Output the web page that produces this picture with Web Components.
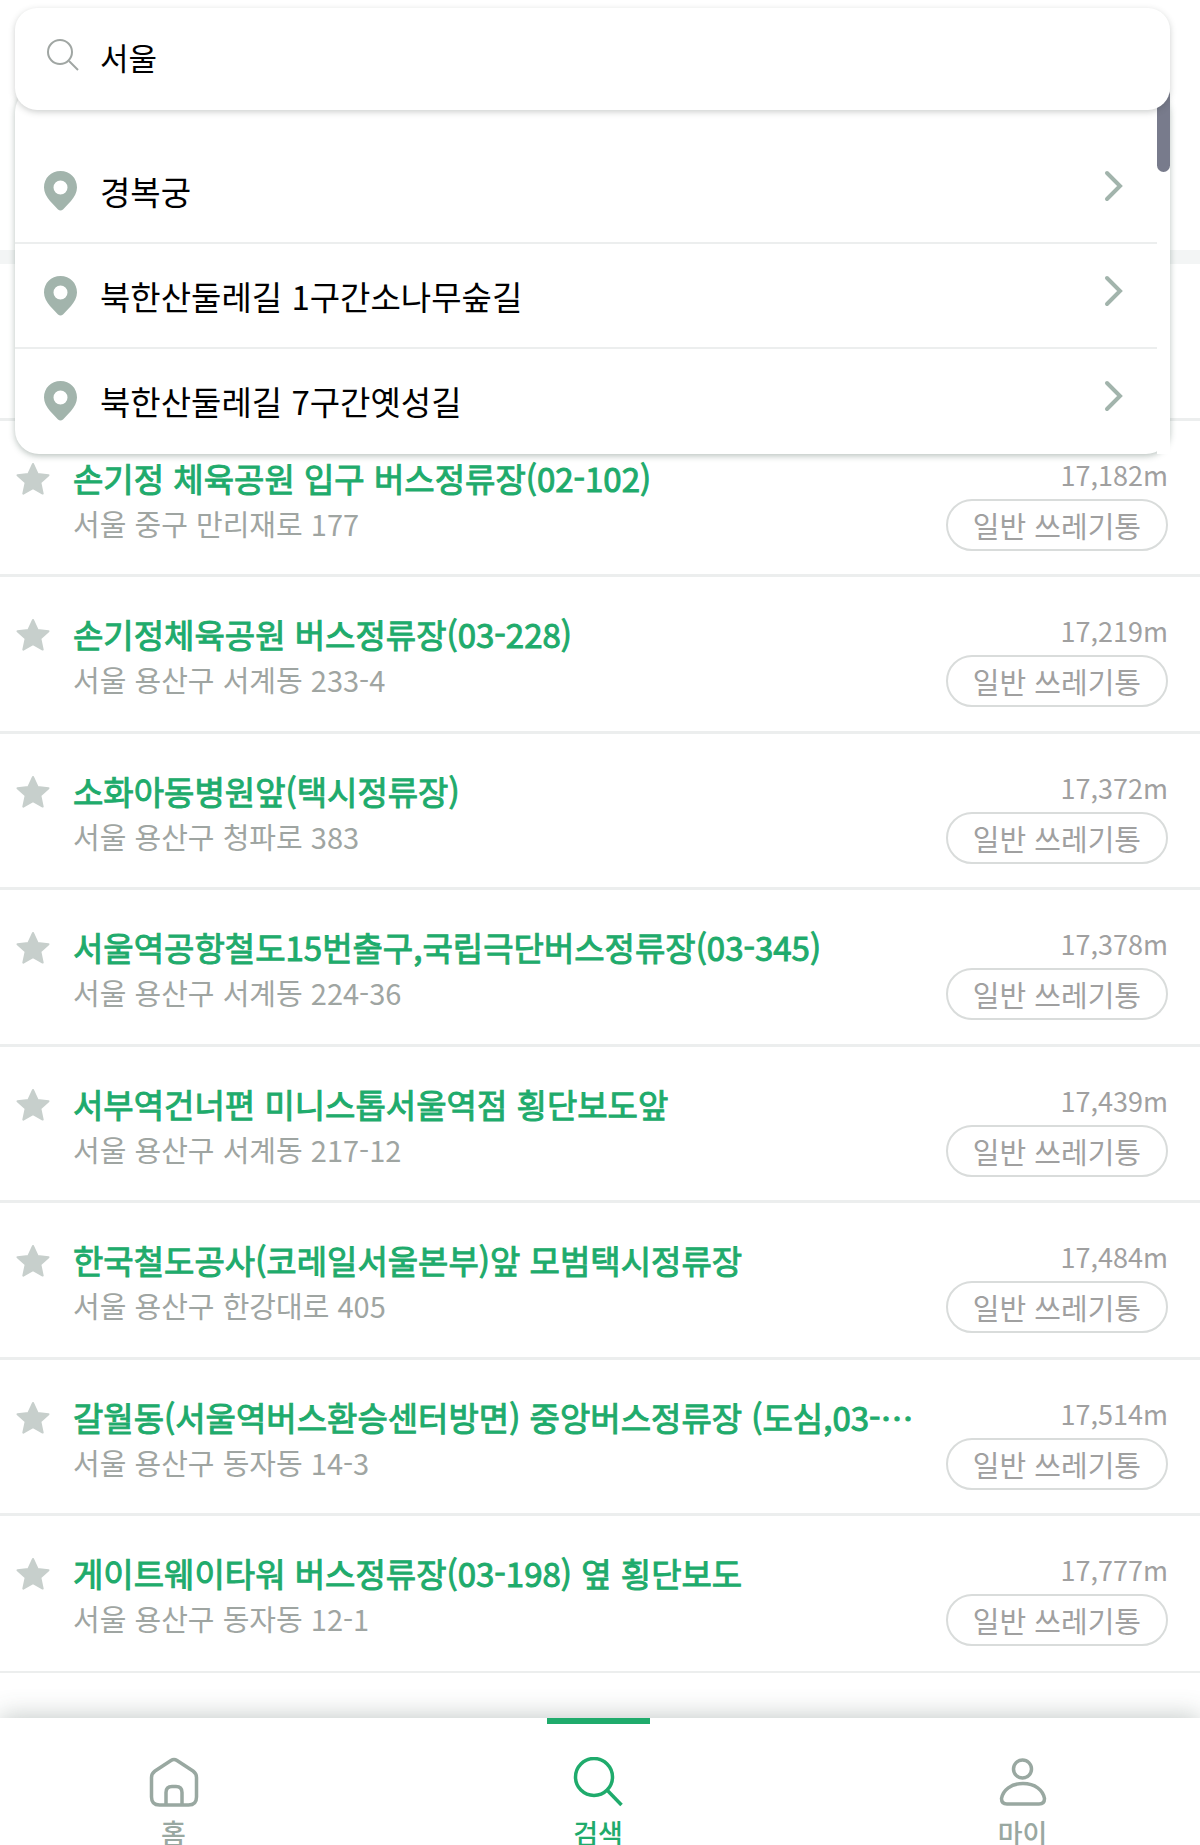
<!DOCTYPE html>
<html lang="ko">
<head>
<meta charset="utf-8">
<meta name="viewport" content="width=device-width, initial-scale=1">
<title>쓰레기통 검색</title>
<style>
  :root {
    --green: #1fab6c;
    --sage: #a2b4ac;
    --gray: #9fa5a2;
    --line: #eceeee;
  }

  html, body {
    margin: 0;
    height: 100%;
    background: #fff;
    font-family: "Noto Sans CJK KR", "Noto Sans", sans-serif;
  }

  body { overflow: hidden; }
</style>
</head>
<body>
<bin-app>
  <search-panel slot="search" value="서울">
    <place-item>경복궁</place-item>
    <place-item>북한산둘레길 1구간소나무숲길</place-item>
    <place-item>북한산둘레길 7구간옛성길</place-item>
  </search-panel>

  <bin-item></bin-item>
  <bin-item address="서울 중구 만리재로 177" distance="17,182m" kind="일반 쓰레기통">손기정 체육공원 입구 버스정류장(02-102)</bin-item>
  <bin-item address="서울 용산구 서계동 233-4" distance="17,219m" kind="일반 쓰레기통">손기정체육공원 버스정류장(03-228)</bin-item>
  <bin-item address="서울 용산구 청파로 383" distance="17,372m" kind="일반 쓰레기통">소화아동병원앞(택시정류장)</bin-item>
  <bin-item address="서울 용산구 서계동 224-36" distance="17,378m" kind="일반 쓰레기통">서울역공항철도15번출구,국립극단버스정류장(03-345)</bin-item>
  <bin-item address="서울 용산구 서계동 217-12" distance="17,439m" kind="일반 쓰레기통">서부역건너편 미니스톱서울역점 횡단보도앞</bin-item>
  <bin-item address="서울 용산구 한강대로 405" distance="17,484m" kind="일반 쓰레기통">한국철도공사(코레일서울본부)앞 모범택시정류장</bin-item>
  <bin-item address="서울 용산구 동자동 14-3" distance="17,514m" kind="일반 쓰레기통">갈월동(서울역버스환승센터방면) 중앙버스정류장 (도심,03-006)</bin-item>
  <bin-item address="서울 용산구 동자동 12-1" distance="17,777m" kind="일반 쓰레기통">게이트웨이타워 버스정류장(03-198) 옆 횡단보도</bin-item>

  <nav-tab slot="nav" icon="home">홈</nav-tab>
  <nav-tab slot="nav" icon="search" active>검색</nav-tab>
  <nav-tab slot="nav" icon="user">마이</nav-tab>
</bin-app>

<script>
const APP_TEMPLATE = /* html */ `
  <style>
    :host {
      display: flex;
      flex-direction: column;
      position: relative;
      height: 100vh;
    }

    header {
      flex: none;
      height: 250px;
      border-bottom: 14px solid #f3f5f5;
    }

    /* floats over the list */
    .overlay {
      position: absolute;
      z-index: 2;
      top: 8px;
      left: 15px;
      right: 30px;
    }

    main {
      flex: 1;
      display: grid;
      grid-auto-rows: 1fr;
      margin-bottom: 45px;
    }

    nav {
      flex: none;
      display: flex;
      justify-content: space-between;
      height: 127px;
      padding: 0 126px 0 122px;
      background: #fff;
      box-shadow: 0 -2px 24px rgba(60, 80, 72, 0.3);
    }
  </style>
  <header></header>
  <div class="overlay"><slot name="search"></slot></div>
  <main><slot></slot></main>
  <nav><slot name="nav"></slot></nav>
`;

const SEARCH_TEMPLATE = /* html */ `
  <style>
    :host { display: block; }

    .box {
      position: relative;
      z-index: 1;
      display: flex;
      align-items: center;
      gap: 19px;
      height: 102px;
      padding: 0 30px 4px;
      box-sizing: border-box;
      border-radius: 22px;
      background: #fff;
      box-shadow: 0 2px 6px rgba(60, 70, 66, 0.26);
    }

    .box svg {
      flex: none;
      width: 36px;
      height: 36px;
      margin-bottom: 4px;
      fill: none;
      stroke: #a0a6a3;
      stroke-width: 2;
    }

    input {
      flex: 1;
      min-width: 0;
      padding: 0;
      border: 0;
      outline: 0;
      background: none;
      color: #000;
      font: inherit;
      font-size: 31px;
      line-height: 44px;
    }

    .drop {
      display: flex;
      margin-top: -22px;
      border-radius: 24px;
      background: #fff;
      box-shadow: 0 2px 6px rgba(50, 75, 65, 0.34);
    }

    .places {
      flex: 1;
      min-width: 0;
      padding-top: 51px;
    }

    .track {
      width: 13px;
      background: #fff;
    }

    .thumb {
      height: 84px;
      border-radius: 7px;
      background: #787b8c;
    }
  </style>
  <label class="box">
    <svg viewBox="0 0 36 36" aria-hidden="true">
      <circle cx="15" cy="15" r="12"/>
      <path d="M24 24l9 9"/>
    </svg>
    <input type="text" aria-label="검색어">
  </label>
  <div class="drop">
    <div class="places"><slot></slot></div>
    <div class="track"><div class="thumb"></div></div>
  </div>
`;

const PLACE_TEMPLATE = /* html */ `
  <style>
    :host {
      display: block;
      border-bottom: 2px solid var(--line);
    }

    :host(:last-child) { border-bottom-color: transparent; }

    button {
      display: flex;
      align-items: center;
      width: 100%;
      height: 103px;
      padding: 0 32px 0 28px;
      border: 0;
      background: none;
      color: #000;
      font: inherit;
      font-size: 33px;
      line-height: 48px;
      text-align: left;
      cursor: pointer;
    }

    .pin {
      flex: none;
      width: 35px;
      height: 40px;
      margin-right: 22px;
      fill: var(--sage);
    }

    .name { flex: 1; }

    .arrow {
      flex: none;
      width: 22px;
      height: 32px;
      margin-bottom: 10px;
      fill: none;
      stroke: var(--sage);
      stroke-width: 4;
      stroke-linecap: round;
    }
  </style>
  <button type="button">
    <svg class="pin" viewBox="0 0 35 40" aria-hidden="true">
      <path fill-rule="evenodd" d="M17.500 0C8 0 1 7 1 16.500c0 5 2.500 9 6 13.500l8 8.500q2.500 2 5 0l8-8.500c3.500-4.500 6-8.500 6-13.500C34 7 27 0 17.500 0zm0 9.500a7 7 0 1 1 0 14 7 7 0 0 1 0-14z"/>
    </svg>
    <span class="name"><slot></slot></span>
    <svg class="arrow" viewBox="0 0 22 32" aria-hidden="true"><path d="M4 3l13 13L4 29"/></svg>
  </button>
`;

const BIN_TEMPLATE = /* html */ `
  <style>
    :host {
      display: flex;
      align-items: flex-start;
      min-width: 0;
      padding: 0 32px 0 15px;
      border-bottom: 3px solid var(--line);
    }

    :host(:last-of-type) { border-bottom-width: 2px; }

    :host(:not([address])) > * { visibility: hidden; }

    .star {
      flex: none;
      width: 36px;
      height: 36px;
      margin: 40px 22px 0 0;
      padding: 0;
      border: 0;
      background: none;
      cursor: pointer;
    }

    .star svg {
      display: block;
      width: 36px;
      height: 36px;
      fill: #c7cfcc;
      stroke: #c7cfcc;
      stroke-width: 2;
      stroke-linejoin: round;
    }

    .info {
      flex: 1;
      min-width: 0;
      padding-top: 34px;
    }

    .name {
      overflow: hidden;
      margin: 0;
      color: var(--green);
      font-size: 33px;
      font-weight: 400;
      -webkit-text-stroke: 1px var(--green);
      line-height: 46px;
      text-overflow: ellipsis;
      white-space: nowrap;
    }

    .address {
      margin: 0;
      color: var(--gray);
      font-size: 29px;
      line-height: 44px;
    }

    .meta {
      flex: none;
      display: flex;
      flex-direction: column;
      align-items: flex-end;
      gap: 4px;
      margin-left: 28px;
      padding-top: 34px;
      color: #a0a0a0;
      font-size: 27px;
      line-height: 40px;
    }

    .kind {
      padding: 4px 25px;
      border: 2px solid #d9dcdb;
      border-radius: 26px;
      font-size: 29px;
    }
  </style>
  <button class="star" type="button" aria-label="즐겨찾기">
    <svg viewBox="0 0 36 36" aria-hidden="true">
      <path d="M18 3l4.600 10 10.900 1.200-8.100 7.400 2.300 11-9.700-5.400-9.700 5.400 2.300-11-8.100-7.400L13.400 13z"/>
    </svg>
  </button>
  <div class="info">
    <h2 class="name"><slot></slot></h2>
    <p class="address"></p>
  </div>
  <div class="meta">
    <span class="distance"></span>
    <span class="kind"></span>
  </div>
`;

const TAB_ICONS = {
  home: /* html */ `
    <path d="M22 3.500Q25 1.500 28 3.500L44 14Q47.500 16.500 47.500 20.500V40Q47.500 48 39.500 48H10.500Q2.500 48 2.500 40V20.500Q2.500 16.500 6 14z"/>
    <path d="M17 48V35.500Q17 29.500 23 29.500H27Q33 29.500 33 35.500V48"/>`,
  search: /* html */ `
    <circle cx="21" cy="20" r="18.500"/>
    <path d="M34 33l14.500 15"/>`,
  user: /* html */ `
    <circle cx="24.500" cy="12" r="9"/>
    <path d="M9 47Q3.500 47 3.500 41.500C5 33 13 26.500 25 26.500S45 33 46.500 41.500Q46.500 47 41 47z"/>`,
};

const TAB_TEMPLATE = /* html */ `
  <style>
    :host {
      display: block;
      width: 103px;
      color: #99a8a1;
    }

    :host([active]) { color: var(--green); }

    a {
      display: flex;
      flex-direction: column;
      align-items: center;
      gap: 7px;
      padding-top: 33px;
      border-top: 6px solid transparent;
      color: inherit;
      font-size: 27px;
      font-weight: 500;
      line-height: 38px;
      text-decoration: none;
      white-space: nowrap;
    }

    :host([active]) a { border-top-color: currentColor; }

    svg {
      width: 50px;
      height: 50px;
      fill: none;
      stroke: currentColor;
      stroke-width: 3.5;
    }
  </style>
  <a href="#">
    <svg viewBox="0 0 50 50" aria-hidden="true"></svg>
    <span><slot></slot></span>
  </a>
`;

class BinApp extends HTMLElement {
  constructor() {
    super();
    this.attachShadow({ mode: 'open' });
    this.shadowRoot.innerHTML = APP_TEMPLATE;
  }
}

class SearchPanel extends HTMLElement {
  constructor() {
    super();
    this.attachShadow({ mode: 'open' });
    this.shadowRoot.innerHTML = SEARCH_TEMPLATE;
  }

  connectedCallback() {
    this.shadowRoot.querySelector('input').value = this.getAttribute('value') || '';
  }
}

class PlaceItem extends HTMLElement {
  constructor() {
    super();
    this.attachShadow({ mode: 'open' });
    this.shadowRoot.innerHTML = PLACE_TEMPLATE;
  }
}

class BinItem extends HTMLElement {
  static get observedAttributes() {
    return ['address', 'distance', 'kind'];
  }

  constructor() {
    super();
    this.attachShadow({ mode: 'open' });
    this.shadowRoot.innerHTML = BIN_TEMPLATE;
  }

  attributeChangedCallback(name, _old, value) {
    this.shadowRoot.querySelector(`.${name}`).textContent = value || '';
  }
}

class NavTab extends HTMLElement {
  constructor() {
    super();
    this.attachShadow({ mode: 'open' });
    this.shadowRoot.innerHTML = TAB_TEMPLATE;
  }

  connectedCallback() {
    this.shadowRoot.querySelector('svg').innerHTML = TAB_ICONS[this.getAttribute('icon')] || '';
  }
}

customElements.define('bin-app', BinApp);
customElements.define('search-panel', SearchPanel);
customElements.define('place-item', PlaceItem);
customElements.define('bin-item', BinItem);
customElements.define('nav-tab', NavTab);
</script>
</body>
</html>
